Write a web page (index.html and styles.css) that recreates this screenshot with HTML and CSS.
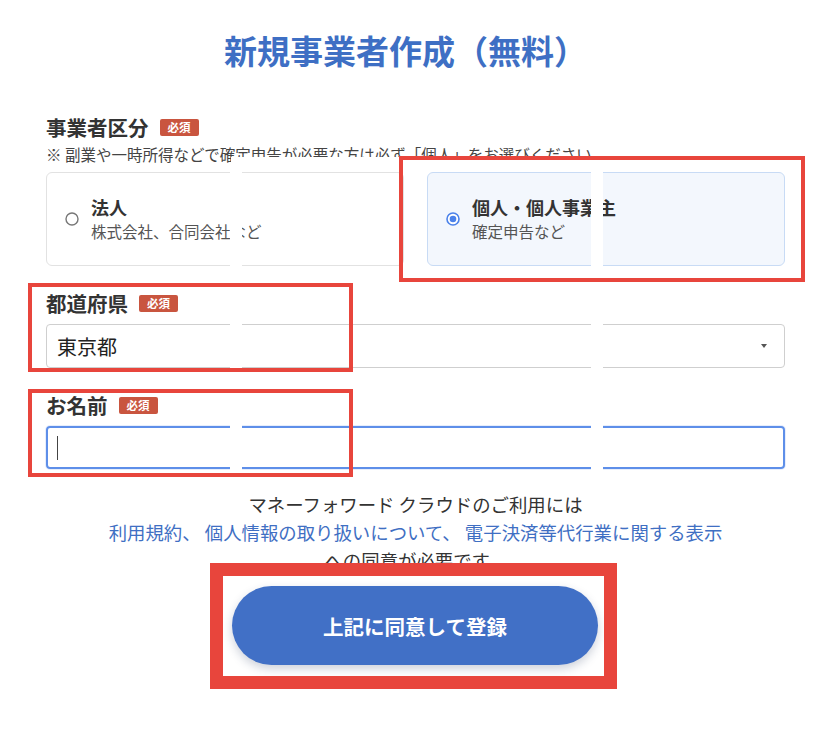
FILE: index.html
```html
<!DOCTYPE html>
<html lang="ja">
<head>
    <meta charset="UTF-8">
    <meta name="viewport" content="width=device-width, initial-scale=1.0">
    <title>新規事業者作成（無料）</title>
    <link rel="stylesheet" href="styles.css">
</head>
<body>

    <main class="page">
        <h1 class="title">新規事業者作成（無料）</h1>

        <section class="field">
            <div class="label">事業者区分<span class="badge">必須</span></div>
            <p class="note">※ 副業や一時所得などで確定申告が必要な方は必ず「個人」をお選びください</p>
            <div class="options">
                <label class="option">
                    <svg class="radio" viewBox="0 0 14 14"><circle cx="7" cy="7" r="6" fill="#fff" stroke="#777" stroke-width="1.4"/></svg>
                    <span class="option-text">
                        <span class="option-name">法人</span>
                        <span class="option-sub">株式会社、合同会社など</span>
                    </span>
                </label>
                <label class="option is-selected">
                    <svg class="radio" viewBox="0 0 14 14"><circle cx="7" cy="7" r="6" fill="#fff" stroke="#4b82ea" stroke-width="1.6"/><circle cx="7" cy="7" r="3.3" fill="#4b82ea"/></svg>
                    <span class="option-text">
                        <span class="option-name">個人・個人事業主</span>
                        <span class="option-sub">確定申告など</span>
                    </span>
                </label>
            </div>
        </section>

        <section class="field">
            <div class="label">都道府県<span class="badge">必須</span></div>
            <div class="select">
                <span>東京都</span>
                <svg class="arrow" viewBox="0 0 6 4"><path d="M0 0h6L3 4z" fill="#555"/></svg>
            </div>
        </section>

        <section class="field">
            <div class="label">お名前<span class="badge">必須</span></div>
            <div class="input is-focused"><span class="caret"></span></div>
        </section>

        <p class="consent">
            マネーフォワード クラウドのご利用には<br>
            <span class="links"><a href="#">利用規約</a>、 <a href="#">個人情報の取り扱いについて</a>、 <a href="#">電子決済等代行業に関する表示</a></span><br>
            への同意が必要です。
        </p>

        <div class="actions">
            <button type="button" class="submit">上記に同意して登録</button>
        </div>

        <!-- screenshot seams and review marks -->
        <div class="seam seam-band"></div>
        <div class="seam seam-left"></div>
        <div class="seam seam-right"></div>
        <div class="mark mark-type"></div>
        <div class="mark mark-pref"></div>
        <div class="mark mark-name"></div>
        <div class="mark mark-submit"></div>
    </main>

</body>
</html>
```

FILE: styles.css
```css
body {
    margin: 0;
    padding: 0;
    background: #fff;
    color: #333;
    font-family: "Noto Sans CJK JP", "Noto Sans", sans-serif;
}

.page {
    position: relative;
    width: 739px;
    min-height: 742px;
    padding: 26px 49px 0 46px;
}

.title {
    margin: 0 0 39px;
    padding-right: 20px;
    text-align: center;
    font-size: 33px;
    line-height: 48px;
    font-weight: 700;
    color: #3e6fc4;
}

.field {
    margin-bottom: 23px;
}

.label {
    display: flex;
    align-items: center;
    font-size: 20.5px;
    line-height: 28px;
    font-weight: 700;
    color: #333;
}

.badge {
    margin-left: 11px;
    padding: 0 8px;
    height: 17px;
    line-height: 17px;
    border-radius: 2px;
    background: #c9553f;
    color: #fff;
    font-size: 11.5px;
    font-weight: 700;
}

.note {
    margin: 1px 0 6px;
    font-size: 15.5px;
    line-height: 24px;
    color: #444;
}

.options {
    display: grid;
    grid-template-columns: 358px 358px;
    gap: 23px;
}

.option {
    display: flex;
    align-items: center;
    gap: 12px;
    height: 92px;
    padding: 0 18px;
    border: 1px solid #e2e2e2;
    border-radius: 6px;
    background: #fff;
}

.option.is-selected {
    background: #f3f7fd;
    border-color: #c8dbf5;
}

.radio {
    width: 14px;
    height: 14px;
    flex: none;
}

.option-text {
    display: flex;
    flex-direction: column;
}

.option-name {
    font-size: 18px;
    line-height: 25px;
    font-weight: 700;
    color: #333;
}

.option-sub {
    font-size: 15.5px;
    line-height: 23px;
    color: #555;
}

.label + .select,
.label + .input {
    margin-top: 7px;
}

.select {
    display: flex;
    align-items: center;
    justify-content: space-between;
    height: 42px;
    padding: 0 17px 0 10px;
    border: 1px solid #cfcfcf;
    border-radius: 4px;
    font-size: 20px;
    color: #222;
}

.arrow {
    width: 6px;
    height: 4px;
}

.input {
    display: flex;
    align-items: center;
    height: 39px;
    padding: 0 9px;
    border: 2px solid #5e8fe9;
    border-radius: 4px;
    box-shadow: 0 0 0 1px rgba(94, 143, 233, 0.15);
}

.caret {
    width: 1px;
    height: 24px;
    background: #444;
}

.consent {
    margin: -2px 0 0;
    text-align: center;
    font-size: 18.4px;
    line-height: 28px;
    color: #333;
}

.links,
.links a {
    color: #3f6fc3;
    text-decoration: none;
}

.actions {
    display: flex;
    margin-top: 12px;
    padding-left: 186px;
}

.submit {
    width: 366px;
    height: 79px;
    border: none;
    border-radius: 40px;
    background: #4170c6;
    color: #fff;
    font-family: inherit;
    font-size: 20.5px;
    font-weight: 700;
    box-shadow: 0 4px 10px rgba(30, 50, 90, 0.22);
    cursor: pointer;
}

.seam {
    position: absolute;
    background: #fff;
}

.seam-band { left: 231px; top: 157px; width: 372px; height: 14px; }
.seam-left { left: 230px; top: 170px; width: 12px; height: 302px; }
.seam-right { left: 591px; top: 170px; width: 12px; height: 302px; }

.mark {
    position: absolute;
    box-sizing: border-box;
    border: 4px solid #e8453c;
}

.mark-type { left: 399px; top: 156px; width: 406px; height: 126px; }
.mark-pref { left: 28px; top: 283px; width: 325px; height: 89px; }
.mark-name { left: 28px; top: 389px; width: 325px; height: 88px; }
.mark-submit { left: 210px; top: 563px; width: 407px; height: 126px; border-width: 13px; }
```
